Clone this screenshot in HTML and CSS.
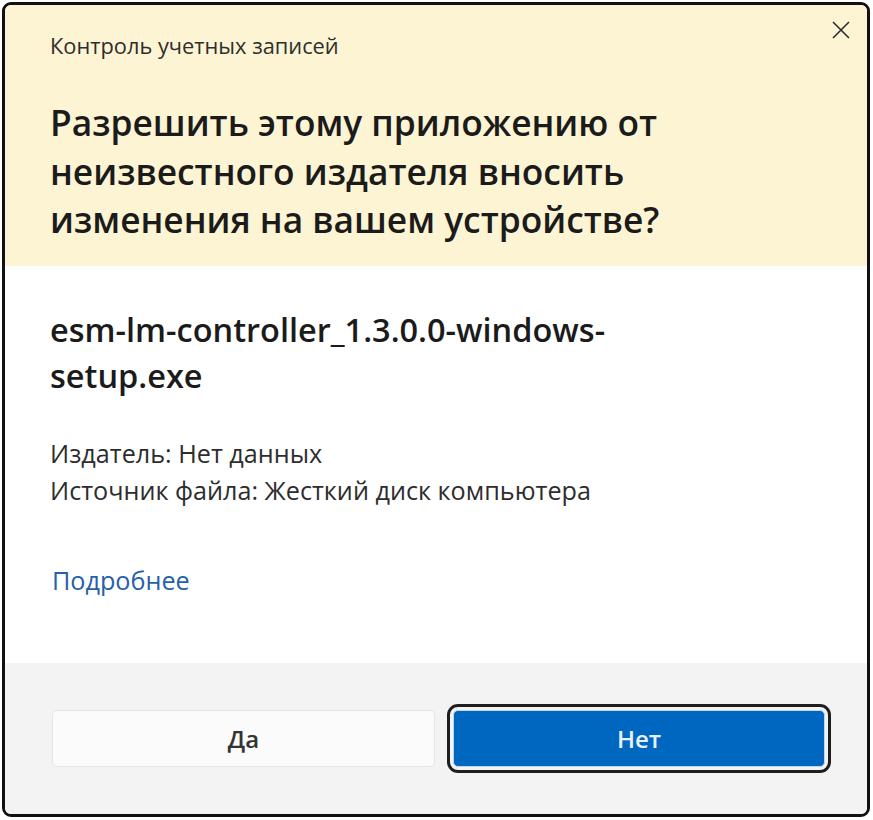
FILE: index.html
```html
<!DOCTYPE html>
<html lang="ru">
<head>
<meta charset="utf-8">
<title>Контроль учетных записей</title>
<link rel="stylesheet" href="styles.css">
</head>
<body>
<div class="dialog">
  <header class="head">
    <div class="caption">Контроль учетных записей</div>
    <button class="close" aria-label="Закрыть">
      <svg width="20" height="20" viewBox="0 0 20 20"><path d="M2 2 L18 18 M18 2 L2 18" stroke="#2b2b2b" stroke-width="1.6" fill="none"/></svg>
    </button>
    <h1 class="title">Разрешить этому приложению от<br>неизвестного издателя вносить<br>изменения на вашем устройстве?</h1>
  </header>
  <main class="body">
    <div class="file">esm-lm-controller_1.3.0.0-windows-<br>setup.exe</div>
    <div class="meta">
      <div>Издатель: Нет данных</div>
      <div>Источник файла: Жесткий диск компьютера</div>
    </div>
    <a class="more" href="#">Подробнее</a>
  </main>
  <footer class="foot">
    <button class="btn btn-yes">Да</button>
    <button class="btn btn-no">Нет</button>
  </footer>
</div>
</body>
</html>
```
FILE: styles.css
```css
* { box-sizing: border-box; }
html, body { margin: 0; padding: 0; background: #ffffff; }
body { font-family: "Open Sans", "Noto Sans", "DejaVu Sans", sans-serif; color: #1b1b1b; }

.dialog {
  position: relative;
  margin: 2px 0 0 2px;
  width: 868px;
  height: 815px;
  border: 3px solid #111111;
  border-radius: 9px;
  overflow: hidden;
  display: flex;
  flex-direction: column;
  background: #ffffff;
}

.head {
  background: #fdf4d3;
  height: 261px;
  padding: 29px 0 0 45px;
  flex: none;
}
.caption {
  font-size: 21.8px;
  line-height: 24px;
  color: #2e2e2e;
}
.close {
  position: absolute;
  top: 15px;
  right: 16px;
  width: 20px;
  height: 20px;
  padding: 0;
  border: 0;
  background: none;
  display: block;
}
.close svg { display: block; }
.title {
  margin: 40px 0 0 0;
  font-size: 35.3px;
  line-height: 48.5px;
  font-weight: 600;
  color: #1b1b1b;
}

.body {
  flex: 1;
  padding: 41px 0 0 45px;
}
.file {
  font-size: 32.5px;
  line-height: 46px;
  font-weight: 600;
  color: #1b1b1b;
}
.meta {
  margin-top: 36px;
  font-size: 25.2px;
  line-height: 37px;
  color: #2d2d2d;
}
.more {
  display: block;
  margin-top: 53px;
  font-size: 25.2px;
  line-height: 37px;
  color: #2760a8;
  text-decoration: none;
  padding-left: 2px;
}

.foot {
  flex: none;
  height: 151px;
  background: #f3f3f3;
  padding: 47px 0 0 47px;
  display: grid;
  grid-template-columns: 383px 372px;
  grid-template-rows: 57px;
  column-gap: 18px;
}
.btn {
  font-family: inherit;
  font-size: 24px;
  font-weight: 600;
  border-radius: 5px;
  height: 57px;
  padding: 0;
}
.btn-yes {
  background: #fbfbfb;
  border: 1px solid #e6e6e6;
  color: #333333;
}
.btn-no {
  background: #0067c0;
  border: 1px solid #b9d8f3;
  color: #e8f1fb;
  outline: 3px solid #1e1e1e;
  outline-offset: 3px;
  border-radius: 5px;
}
```
